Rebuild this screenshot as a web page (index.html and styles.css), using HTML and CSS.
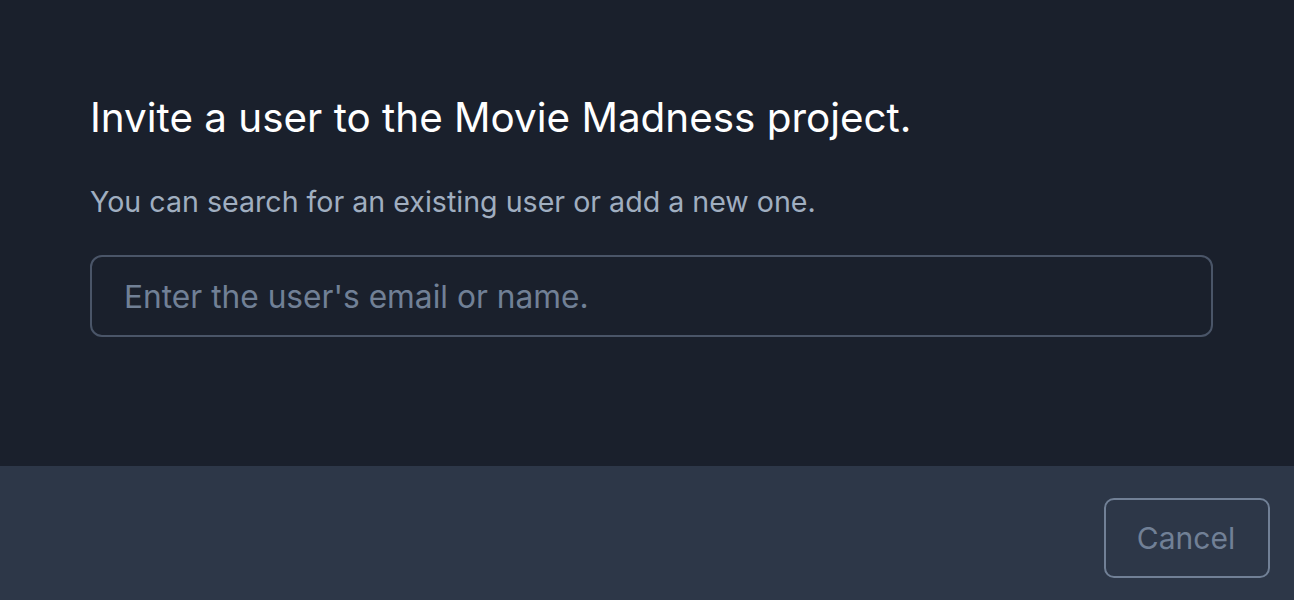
FILE: index.html
```html
<!DOCTYPE html>
<html>
<head>
<meta charset="utf-8">
<link rel="stylesheet" href="styles.css">
</head>
<body>
<div class="modal">
  <div class="content">
    <h1 class="title">Invite a user to the Movie Madness project.</h1>
    <p class="subtitle">You can search for an existing user or add a new one.</p>
    <input class="search" type="text" placeholder="Enter the user's email or name.">
  </div>
  <div class="footer">
    <button class="cancel">Cancel</button>
  </div>
</div>
</body>
</html>
```

FILE: styles.css
```css
html, body {
  margin: 0;
  padding: 0;
  height: 100%;
  background: #1a202c;
  font-family: Inter, "Noto Sans", sans-serif;
}
.modal {
  display: flex;
  flex-direction: column;
  height: 600px;
}
.content {
  height: 466px;
  box-sizing: border-box;
  padding: 94px 81px 0 90px;
  background: #1a202c;
}
.title {
  margin: 0;
  font-size: 40.4px;
  font-weight: 400;
  line-height: 48px;
  color: #ffffff;
}
.subtitle {
  margin: 42px 0 0;
  font-size: 28.6px;
  line-height: 36px;
  color: #a0aec0;
}
.search {
  display: block;
  margin-top: 35px;
  width: 100%;
  height: 82px;
  box-sizing: border-box;
  padding: 0 32px;
  background: transparent;
  border: 2px solid #4a5568;
  border-radius: 12px;
  font-family: inherit;
  font-size: 31.7px;
  color: #e2e8f0;
  outline: none;
}
.search::placeholder {
  color: #718096;
}
.footer {
  flex: 1;
  background: #2d3748;
  display: flex;
  justify-content: flex-end;
  align-items: flex-start;
  padding: 32px 24px 0 0;
}
.cancel {
  width: 166px;
  height: 80px;
  background: transparent;
  border: 2px solid #718096;
  border-radius: 10px;
  font-family: inherit;
  font-size: 30px;
  color: #718096;
  padding: 0 2px 0 0;
}
```
